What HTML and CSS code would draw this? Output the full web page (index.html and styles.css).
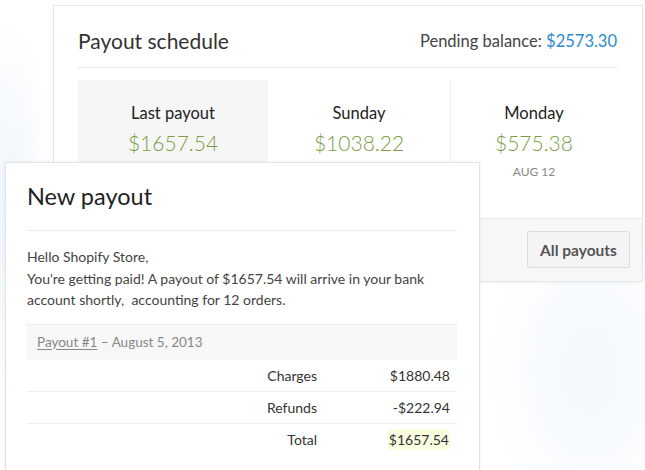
FILE: index.html
```html
<!DOCTYPE html>
<html>
<head>
<meta charset="utf-8">
<link rel="stylesheet" href="styles.css">
</head>
<body>
<div class="stage">
  <section class="schedule">
    <div class="sched-inner">
      <header class="sched-head">
        <h2 class="sched-title">Payout schedule</h2>
        <div class="pending">Pending balance: <span class="blue">$2573.30</span></div>
      </header>
      <div class="cols">
        <div class="col col-last">
          <div class="col-label">Last payout</div>
          <div class="col-amt">$1657.54</div>
        </div>
        <div class="col col-mid">
          <div class="col-label">Sunday</div>
          <div class="col-amt">$1038.22</div>
        </div>
        <div class="col">
          <div class="col-label">Monday</div>
          <div class="col-amt">$575.38</div>
          <div class="col-date">AUG 12</div>
        </div>
      </div>
    </div>
    <footer class="sched-foot">
      <button class="btn">All payouts</button>
    </footer>
  </section>

  <section class="email">
    <h2 class="email-title">New payout</h2>
    <div class="email-body">
      <p>Hello Shopify Store,<br>You're getting paid! A payout of $1657.54 will arrive in your bank<br>account shortly,&nbsp; accounting for 12 orders.</p>
    </div>
    <div class="tbl">
      <div class="tbl-head"><span class="ulink">Payout #1</span> – August 5, 2013</div>
      <div class="tbl-row"><span class="lbl">Charges</span><span class="val">$1880.48</span></div>
      <div class="tbl-row"><span class="lbl">Refunds</span><span class="val">-$222.94</span></div>
      <div class="tbl-row last"><span class="lbl">Total</span><span class="val"><span class="hl">$1657.54</span></span></div>
    </div>
  </section>
</div>
</body>
</html>
```

FILE: styles.css
```css
html, body {
  margin: 0;
  padding: 0;
}
body {
  width: 645px;
  height: 470px;
  overflow: hidden;
  font-family: Lato, "Liberation Sans", sans-serif;
  color: #333;
  background:
    radial-gradient(ellipse 50px 200px at 5px 210px, rgba(225, 238, 248, 0.6), rgba(255,255,255,0) 100%),
    radial-gradient(ellipse 110px 170px at 590px 370px, rgba(230, 241, 249, 0.55), rgba(255,255,255,0) 100%),
    #ffffff;
}
.stage {
  position: relative;
  width: 645px;
  height: 470px;
  padding-top: 5px;
  box-sizing: border-box;
  overflow: hidden;
}
.schedule {
  margin: 0 0 0 53px;
  width: 588px;
  height: 275px;
  border: 1px solid #e6e6e6;
  background: #fff;
  box-shadow: 0 1px 3px rgba(0,0,0,0.05);
  display: flex;
  flex-direction: column;
}
.sched-inner {
  padding: 0 25px 0 24px;
  flex: 1;
}
.sched-head {
  height: 62px;
  border-bottom: 1px solid #e6e6e6;
  display: flex;
  justify-content: space-between;
  align-items: flex-end;
  box-sizing: border-box;
}
.sched-title {
  margin: 0 0 14px 0;
  font-size: 21px;
  font-weight: 400;
  color: #333;
  line-height: 24px;
}
.pending {
  margin: 0 0 16px 0;
  font-size: 16.5px;
  color: #444;
  line-height: 20px;
}
.blue { color: #2b8ad0; }
.cols {
  margin-top: 12px;
  height: 137px;
  display: grid;
  grid-template-columns: 190px 183px 1fr;
}
.col {
  text-align: center;
  padding-top: 23px;
  box-sizing: border-box;
}
.col-last { background: #f6f6f6; }
.col-mid { border-right: 1px solid #ececec; }
.col-label {
  font-size: 16.5px;
  line-height: 20px;
  color: #222;
}
.col-amt {
  margin-top: 7px;
  font-size: 21px;
  font-weight: 300;
  line-height: 26px;
  color: #7d9c45;
}
.col-date {
  margin-top: 8px;
  font-size: 12px;
  color: #888;
  line-height: 16px;
}
.sched-foot {
  height: 63px;
  border-top: 1px solid #e8e8e8;
  background: #f7f7f7;
  display: flex;
  justify-content: flex-end;
  align-items: flex-start;
  padding: 12px 12px 0 0;
  box-sizing: border-box;
}
.btn {
  width: 103px;
  height: 37px;
  border: 1px solid #dcdcdc;
  background: #f4f4f4;
  border-radius: 2px;
  font-family: Lato, "Liberation Sans", sans-serif;
  font-size: 15.5px;
  font-weight: 700;
  color: #555;
  padding: 0;
}
.email {
  position: absolute;
  left: 5px;
  top: 162px;
  width: 475px;
  height: 320px;
  border: 1px solid #e3e3e3;
  background: #fff;
  box-shadow: 0 0 4px rgba(0,0,0,0.06);
  padding: 0 22px 0 21px;
  box-sizing: border-box;
}
.email-title {
  margin: 0;
  height: 68px;
  border-bottom: 1px solid #ebebeb;
  font-size: 23.5px;
  font-weight: 400;
  color: #222;
  line-height: 28px;
  padding-top: 19px;
  box-sizing: border-box;
}
.email-body p {
  margin: 15px 0 0 0;
  font-size: 14px;
  line-height: 21.5px;
  color: #444;
}
.tbl {
  margin-top: 13px;
  border-top: 1px solid #ececec;
}
.tbl-head {
  height: 35px;
  background: #f7f7f7;
  padding-left: 10px;
  font-size: 13.5px;
  line-height: 35px;
  color: #888;
}
.ulink {
  text-decoration: underline;
  text-underline-offset: 2px;
}
.tbl-row {
  height: 31px;
  border-bottom: 1px solid #efefef;
  display: grid;
  grid-template-columns: 290px 1fr;
  font-size: 14px;
  line-height: 31px;
  color: #333;
  padding-right: 7px;
}
.tbl-row.last { border-bottom: none; }
.lbl { text-align: right; }
.val { text-align: right; }
.hl {
  background: #fbfde0;
  padding: 2px 1px;
}
```
